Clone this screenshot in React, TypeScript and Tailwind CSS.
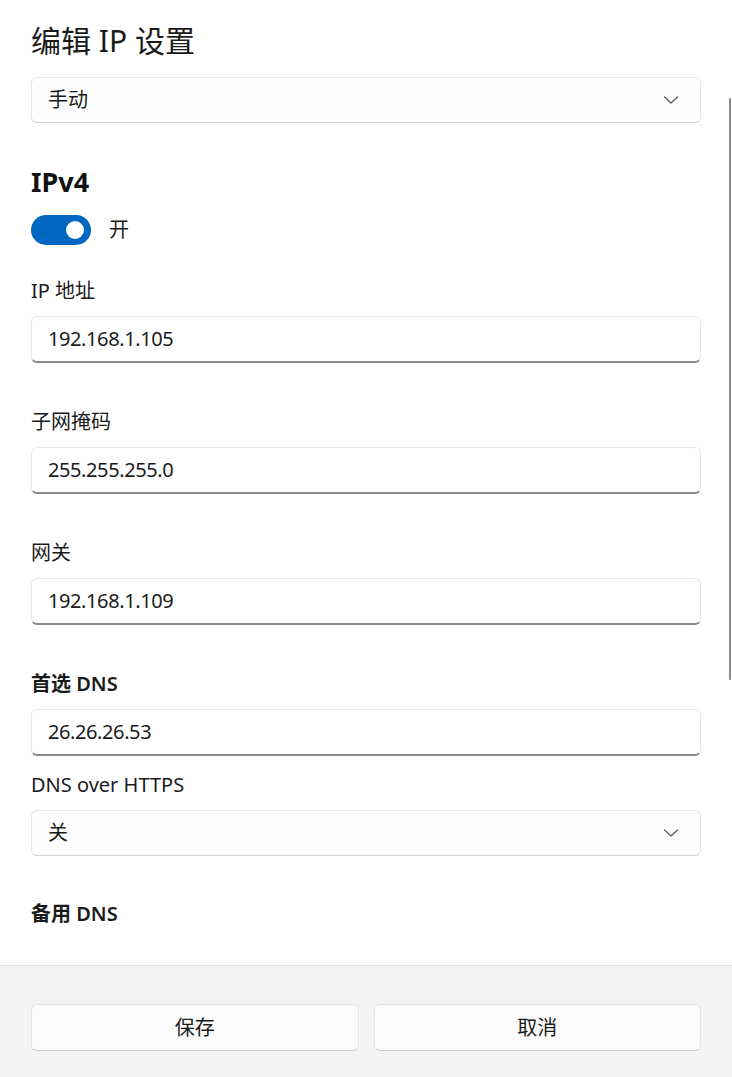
import React from "react";

const font = { fontFamily: '"Noto Sans", "Noto Sans CJK SC", sans-serif' };

function Chevron() {
  return (
    <svg width="16" height="10" viewBox="0 0 16 10" fill="none" className="text-[#5c5c5c]">
      <path d="M1.5 2 L8 8 L14.5 2" stroke="currentColor" strokeWidth="1.3" strokeLinecap="round" strokeLinejoin="round" />
    </svg>
  );
}

function Select({ value }: { value: string }) {
  return (
    <div className="flex h-[46px] items-center justify-between rounded-[6px] border border-[#e6e6e6] border-b-[#d2d2d2] bg-[#fefefe] pl-[16px] pr-[21px]">
      <span className="text-[20px] leading-[28px] text-[#1b1b1b]">{value}</span>
      <Chevron />
    </div>
  );
}

function Input({ value }: { value: string }) {
  return (
    <div className="flex h-[47px] items-center rounded-[6px] border border-[#e8e8e8] border-b-2 border-b-[#8a8a8a] bg-white pl-[16px]">
      <span className="text-[20px] leading-[28px] tracking-[-0.4px] text-[#1b1b1b]">{value}</span>
    </div>
  );
}

function Label({ children, strong }: { children: React.ReactNode; strong?: boolean }) {
  return (
    <div className={"text-[20px] leading-[28px] text-[#1b1b1b] " + (strong ? "font-semibold" : "")}>{children}</div>
  );
}

export default function App() {
  return (
    <div style={font} className="flex h-[1077px] w-[732px] flex-col overflow-hidden bg-white">
      <div className="relative flex-1 px-[31px] pt-[20px]">
        <h1 className="text-[30px] font-normal leading-[42px] text-[#1b1b1b]">编辑 IP 设置</h1>
        <div className="mt-[15px]">
          <Select value="手动" />
        </div>
        <h2 className="mt-[41px] text-[27px] font-bold leading-[36px] text-[#111]">IPv4</h2>
        <div className="mt-[15px] flex items-center gap-[18px]">
          <div className="flex h-[30px] w-[60px] items-center justify-end rounded-full bg-[#0067c0] pr-[7px]">
            <div className="h-[18px] w-[18px] rounded-full bg-white" />
          </div>
          <span className="text-[20px] leading-[28px] text-[#1b1b1b]">开</span>
        </div>

        <div className="mt-[32px]">
          <Label>IP 地址</Label>
        </div>
        <div className="mt-[11px]">
          <Input value="192.168.1.105" />
        </div>

        <div className="mt-[45px]">
          <Label>子网掩码</Label>
        </div>
        <div className="mt-[11px]">
          <Input value="255.255.255.0" />
        </div>

        <div className="mt-[45px]">
          <Label>网关</Label>
        </div>
        <div className="mt-[11px]">
          <Input value="192.168.1.109" />
        </div>

        <div className="mt-[45px]">
          <Label strong>首选 DNS</Label>
        </div>
        <div className="mt-[11px]">
          <Input value="26.26.26.53" />
        </div>

        <div className="mt-[15px]">
          <Label>DNS over HTTPS</Label>
        </div>
        <div className="mt-[11px]">
          <Select value="关" />
        </div>

        <div className="mt-[44px]">
          <Label strong>备用 DNS</Label>
        </div>

        <div className="absolute right-[1px] top-[98px] h-[582px] w-[2px] rounded-full bg-[#8a8a8a]" />
      </div>

      <div className="flex h-[112px] shrink-0 gap-[15px] border-t border-[#e3e3e3] bg-[#f3f3f3] px-[31px] pt-[38px]">
        <button className="flex h-[47px] flex-1 items-center justify-center rounded-[6px] border border-[#e5e5e5] border-b-[#cfcfcf] bg-[#fbfbfb] text-[20px] text-[#1b1b1b]">
          保存
        </button>
        <button className="flex h-[47px] flex-1 items-center justify-center rounded-[6px] border border-[#e5e5e5] border-b-[#cfcfcf] bg-[#fbfbfb] text-[20px] text-[#1b1b1b]">
          取消
        </button>
      </div>
    </div>
  );
}
